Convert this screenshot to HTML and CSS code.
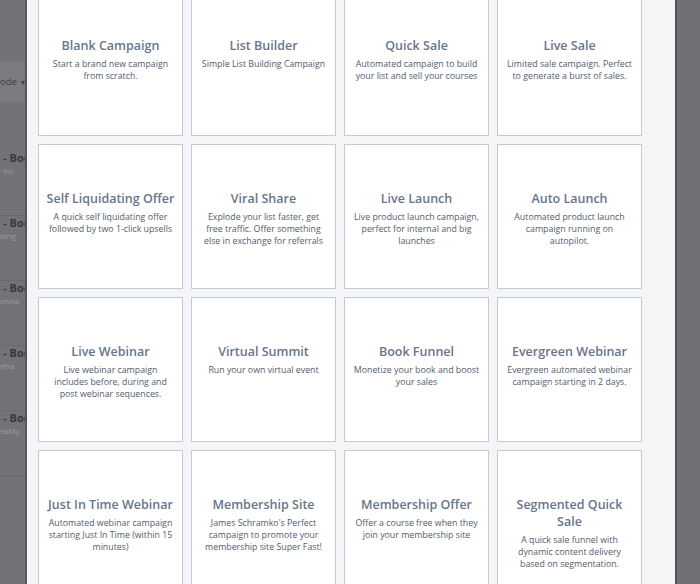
FILE: index.html
```html
<!DOCTYPE html>
<html>
<head>
<meta charset="utf-8">
<link rel="stylesheet" href="styles.css">
</head>
<body>
<div class="page">
  <aside class="backdrop-left">
    <div class="select">ode <span class="caret">&#9662;</span></div>
    <div class="rows">
      <div class="row"><div class="row-title">1 - Book</div><div class="row-sub">r inc</div></div>
      <div class="row"><div class="row-title">2 - Book</div><div class="row-sub">aling</div></div>
      <div class="row"><div class="row-title">3 - Book</div><div class="row-sub">ionna</div></div>
      <div class="row"><div class="row-title">4 - Book</div><div class="row-sub">ytha</div></div>
      <div class="row"><div class="row-title">5 - Book</div><div class="row-sub">esiMy</div></div>
    </div>
  </aside>
  <main class="modal">
    <div class="grid">
      <div class="card"><h3>Blank Campaign</h3><p>Start a brand new campaign from scratch.</p></div>
      <div class="card"><h3>List Builder</h3><p>Simple List Building Campaign</p></div>
      <div class="card"><h3>Quick Sale</h3><p>Automated campaign to build your list and sell your courses</p></div>
      <div class="card"><h3>Live Sale</h3><p>Limited sale campaign. Perfect to generate a burst of sales.</p></div>

      <div class="card"><h3>Self Liquidating Offer</h3><p>A quick self liquidating offer followed by two 1-click upsells</p></div>
      <div class="card"><h3>Viral Share</h3><p>Explode your list faster, get free traffic. Offer something else in exchange for referrals</p></div>
      <div class="card"><h3>Live Launch</h3><p>Live product launch campaign, perfect for internal and big launches</p></div>
      <div class="card"><h3>Auto Launch</h3><p class="narrow">Automated product launch campaign running on autopilot.</p></div>

      <div class="card"><h3>Live Webinar</h3><p>Live webinar campaign includes before, during and post webinar sequences.</p></div>
      <div class="card"><h3>Virtual Summit</h3><p>Run your own virtual event</p></div>
      <div class="card"><h3>Book Funnel</h3><p>Monetize your book and boost your sales</p></div>
      <div class="card"><h3>Evergreen Webinar</h3><p>Evergreen automated webinar campaign starting in 2 days.</p></div>

      <div class="card"><h3>Just In Time Webinar</h3><p>Automated webinar campaign starting Just In Time (within 15 minutes)</p></div>
      <div class="card"><h3>Membership Site</h3><p>James Schramko's Perfect campaign to promote your membership site Super Fast!</p></div>
      <div class="card"><h3>Membership Offer</h3><p>Offer a course free when they join your membership site</p></div>
      <div class="card"><h3>Segmented Quick Sale</h3><p>A quick sale funnel with dynamic content delivery based on segmentation.</p></div>
    </div>
  </main>
  <aside class="backdrop-right"></aside>
</div>
</body>
</html>
```

FILE: styles.css
```css
html, body {
  margin: 0;
  padding: 0;
}
body {
  width: 700px;
  height: 584px;
  overflow: hidden;
  background: #727377;
  font-family: "Open Sans", "Liberation Sans", sans-serif;
}
.page {
  display: flex;
  height: 584px;
  overflow: hidden;
}
.backdrop-left {
  width: 25px;
  flex: none;
  overflow: hidden;
  background: #727377;
  border-right: 2px solid #55565a;
}
.select {
  margin-top: 62px;
  height: 40px;
  background: #7b7c80;
  color: #3e3f43;
  font-size: 9.5px;
  line-height: 40px;
  white-space: nowrap;
}
.caret {
  font-size: 8px;
  margin-left: 2px;
}
.rows {
  margin-top: 49px;
}
.row {
  height: 65px;
  white-space: nowrap;
  margin-left: -6px;
  border-bottom: 1px solid #6a6b6f;
  box-sizing: border-box;
}
.row-title {
  font-weight: 700;
  font-size: 11px;
  line-height: 14px;
  color: #37383c;
}
.row-sub {
  font-size: 8px;
  line-height: 11px;
  color: #9a9ba0;
  margin-left: 4px;
}
.modal {
  width: 648px;
  flex: none;
  background: #f3f5f7;
  box-sizing: border-box;
  padding-left: 11px;
  overflow: hidden;
}
.grid {
  display: grid;
  grid-template-columns: repeat(4, 145px);
  grid-auto-rows: 145px;
  gap: 8px;
  margin-top: -9px;
}
.card {
  background: #ffffff;
  border: 1px solid #c3cad3;
  box-sizing: border-box;
  padding: 45px 7px 0;
  text-align: center;
}
.card h3 {
  margin: 0;
  font-size: 12.5px;
  line-height: 17px;
  font-weight: 600;
  color: #68758a;
}
.card p {
  margin: 4px 0 0;
  font-size: 8.8px;
  line-height: 12px;
  color: #525c6c;
}
.card p.narrow {
  margin-left: 4px;
  margin-right: 4px;
}
.backdrop-right {
  flex: 1;
  background: #707175;
  border-left: 2px solid #55565a;
}
```
